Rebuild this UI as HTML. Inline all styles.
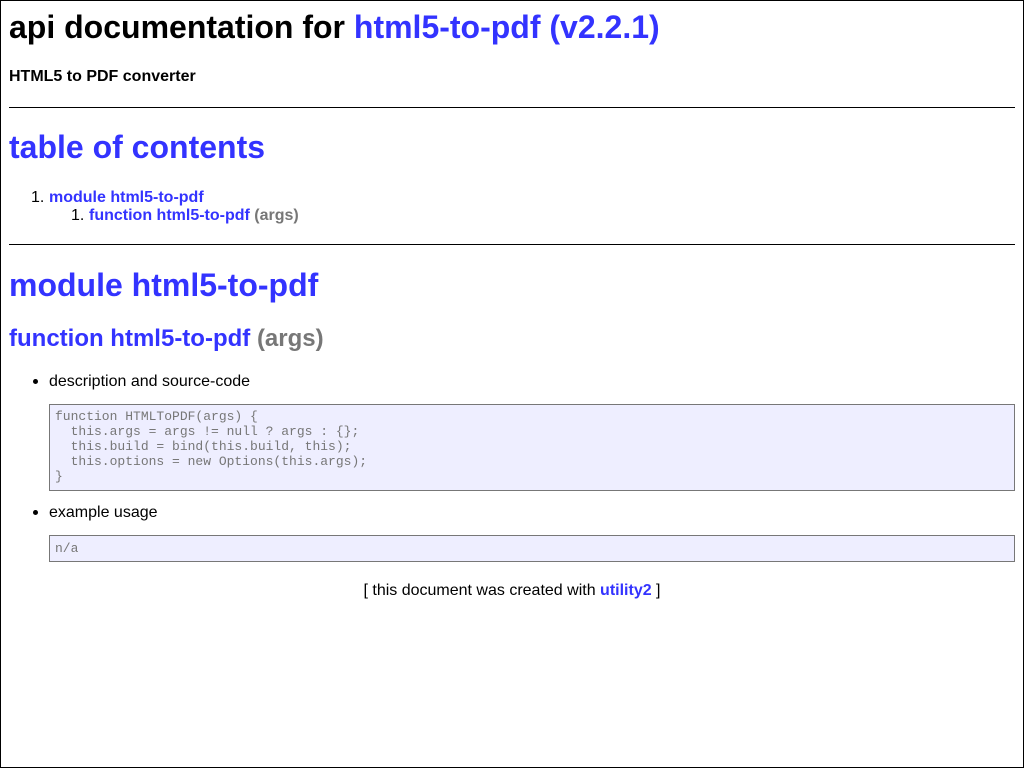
<!DOCTYPE html>
<html><head><meta charset="utf-8"><style>
html,body{margin:0;padding:0;}
body{width:1024px;height:768px;position:relative;overflow:hidden;background:#fff;font-family:"Liberation Sans",Arial,sans-serif;color:#000;}
.frame{position:absolute;left:0;top:0;width:1022px;height:766px;border:1px solid #000;}
.a{position:absolute;white-space:nowrap;}
a{color:#33f;font-weight:bold;text-decoration:none;}
.sig{color:#777;font-weight:bold;}
.hr{position:absolute;left:9px;width:1006px;height:0;border-top:1px solid #000;}
.pre{position:absolute;left:49px;width:954px;background:#eef;border:1px solid #777;color:#777;font-family:"Liberation Mono",monospace;font-size:13px;line-height:15px;padding:5px;white-space:pre;margin:0;}
.dot{position:absolute;width:6px;height:6px;border-radius:50%;background:#000;}
</style></head><body>
<div class="frame"></div>
<div class="a" style="left:9px;top:11px;font-size:32px;line-height:32px;font-weight:bold;">api documentation for <a href="#">html5-to-pdf (v2.2.1)</a></div>
<div class="a" style="left:9px;top:69px;font-size:16px;line-height:16px;font-weight:bold;">HTML5 to PDF converter</div>
<div class="hr" style="top:107px"></div>
<div class="a" style="left:9px;top:131px;font-size:32px;line-height:32px;font-weight:bold;"><a href="#">table of contents</a></div>
<div class="a" style="left:31px;top:190px;font-size:16px;line-height:16px;">1.</div>
<div class="a" style="left:49px;top:190px;font-size:16px;line-height:16px;"><a href="#">module html5-to-pdf</a></div>
<div class="a" style="left:71px;top:208px;font-size:16px;line-height:16px;">1.</div>
<div class="a" style="left:89px;top:208px;font-size:16px;line-height:16px;"><a href="#">function html5-to-pdf</a> <span class="sig">(args)</span></div>
<div class="hr" style="top:244px"></div>
<div class="a" style="left:9px;top:269px;font-size:32px;line-height:32px;"><a href="#">module html5-to-pdf</a></div>
<div class="a" style="left:9px;top:327px;font-size:24px;line-height:24px;"><a href="#">function html5-to-pdf</a> <span class="sig">(args)</span></div>
<div class="dot" style="left:33px;top:379px;width:5px;height:5px"></div>
<div class="a" style="left:49px;top:374px;font-size:16px;line-height:16px;">description and source-code</div>
<pre class="pre" style="top:404px;padding-top:4px;padding-bottom:6px">function HTMLToPDF(args) {
  this.args = args != null ? args : {};
  this.build = bind(this.build, this);
  this.options = new Options(this.args);
}</pre>
<div class="dot" style="left:33px;top:510px;width:5px;height:5px"></div>
<div class="a" style="left:49px;top:505px;font-size:16px;line-height:16px;">example usage</div>
<pre class="pre" style="top:535px;">n/a</pre>
<div class="a" style="left:0;width:1024px;text-align:center;top:583px;font-size:16px;line-height:16px;">[ this document was created with <a href="#">utility2</a> ]</div>
</body></html>
